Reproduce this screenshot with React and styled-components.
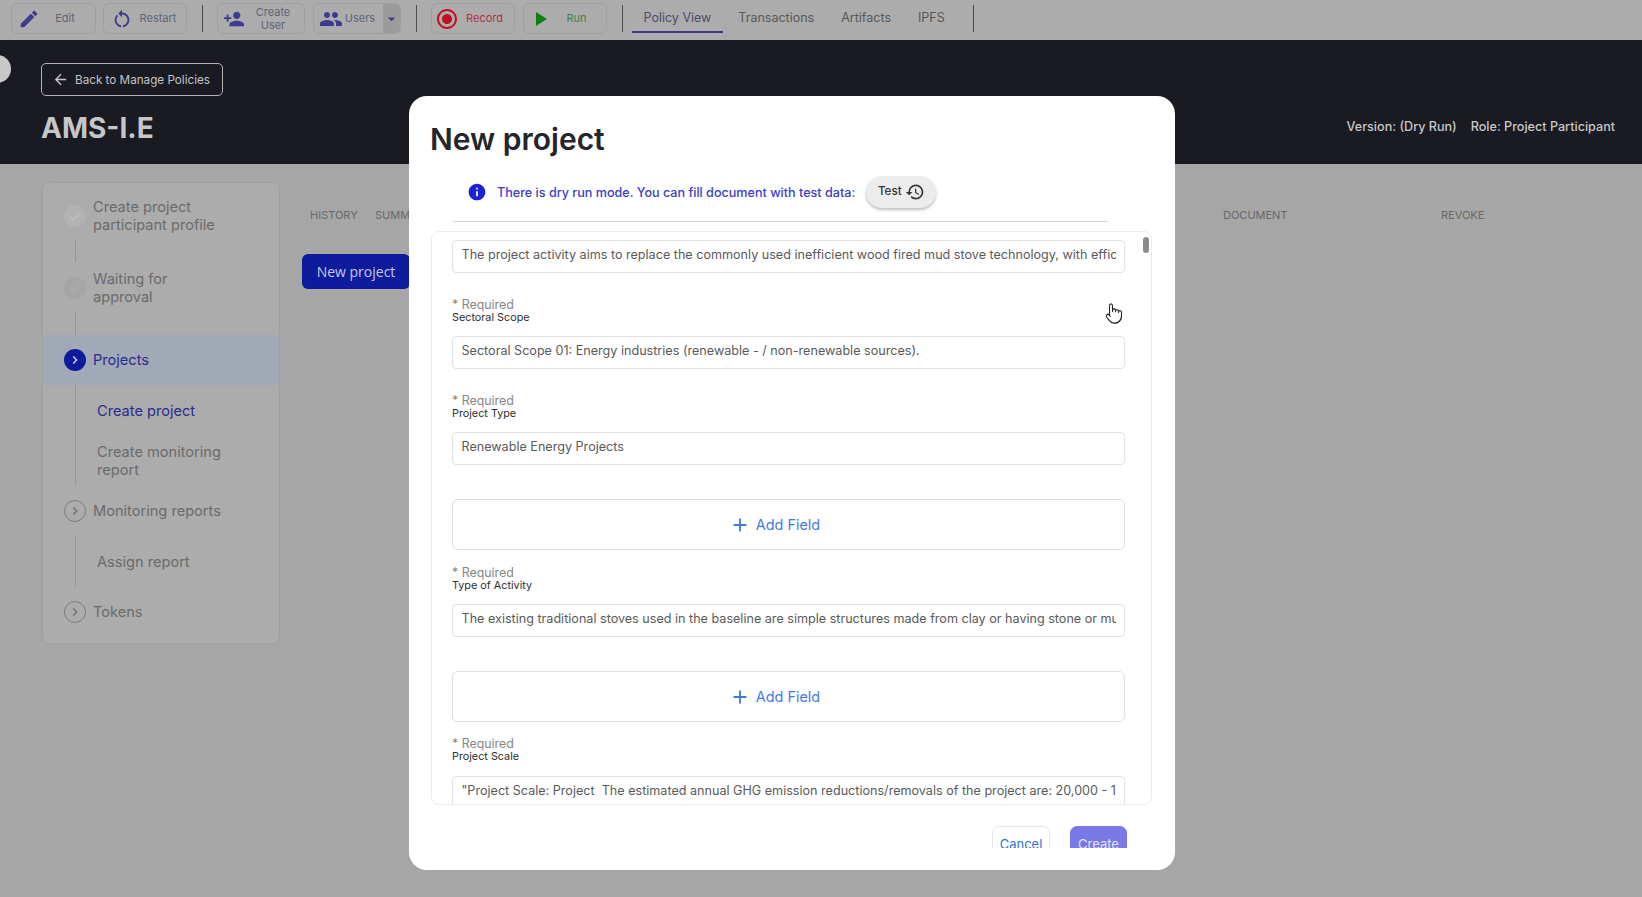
import React from "react";
import styled, { createGlobalStyle } from "styled-components";
import {
  MdEdit, MdRestartAlt, MdPersonAdd, MdPeople, MdArrowDropDown, MdRadioButtonChecked,
  MdPlayArrow, MdArrowBack, MdInfo, MdHistory, MdAdd, MdChevronRight, MdCheck,
} from "react-icons/md";
import { Pointer } from "lucide-react";

const Global = createGlobalStyle`
  html, body { margin: 0; padding: 0; }
  body { width: 1642px; height: 897px; overflow: hidden; background: #a6a6a6; font-family: Inter, "Liberation Sans", sans-serif; }
  * { box-sizing: border-box; }
`;

const Page = styled.div`
  position: relative;
  width: 1642px;
  height: 897px;
  overflow: hidden;
  display: flex;
  flex-direction: column;
`;

const Toolbar = styled.div`
  height: 40px;
  flex: none;
  background: #acacac;
  display: flex;
  align-items: flex-start;
  padding: 3px 0 0 11px;
`;
const ToolButton = styled.div`
  width: ${(p) => p.$w}px;
  height: 31px;
  margin-right: ${(p) => p.$mr ?? 7}px;
  border: 1px solid #a0a0a0;
  border-radius: 6px;
  display: flex;
  align-items: center;
  padding: 0 ${(p) => p.$pr ?? 5}px 0 ${(p) => p.$pl ?? 7}px;
  color: ${(p) => p.$color || "#5f6478"};
  font-size: 11px;
  line-height: 13px;
  & > svg { flex: none; color: ${(p) => p.$icon || "#3d3a91"}; }
`;
const ToolLabel = styled.span`
  flex: 1;
  text-align: center;
`;
const SplitButton = styled(ToolButton)`
  padding-right: 0;
  overflow: hidden;
`;
const DropPart = styled.span`
  width: 17px;
  height: 100%;
  margin-left: 6px;
  background: #9b9b9b;
  display: flex;
  align-items: center;
  justify-content: center;
  color: #3d3a91;
`;
const Divider = styled.span`
  width: 1px;
  height: 27px;
  margin: 2px ${(p) => p.$mr ?? 14}px 0 ${(p) => p.$ml ?? 8}px;
  background: #4c4c4c;
  flex: none;
`;
const Tab = styled.div`
  height: 33px;
  margin-top: -3px;
  padding: 4px 11.5px 0;
  margin-right: 4px;
  display: flex;
  align-items: center;
  font-size: 12.5px;
  color: ${(p) => (p.$active ? "#4d4d68" : "#585858")};
  border-bottom: 2px solid ${(p) => (p.$active ? "#3b3786" : "transparent")};
`;

const Header = styled.header`
  height: 124px;
  flex: none;
  background: #1a1a22;
  padding: 23px 27px 0 42px;
  display: flex;
  flex-direction: column;
  align-items: flex-start;
`;
const BackButton = styled.div`
  width: 182px;
  height: 33px;
  margin-left: -1px;
  border: 1px solid #b4b4b4;
  border-radius: 5px;
  display: flex;
  align-items: center;
  gap: 6px;
  padding-left: 10px;
  font-size: 11.7px;
  color: #c4c4c4;
`;
const HeaderRow = styled.div`
  align-self: stretch;
  display: flex;
  align-items: center;
  justify-content: space-between;
  margin-top: 14px;
  height: 36px;
`;
const PolicyName = styled.h1`
  margin: 0 0 0 -1px;
  font-size: 28px;
  font-weight: 700;
  color: #c6c6c8;
`;
const Meta = styled.div`
  display: flex;
  gap: 14px;
  margin-bottom: 3px;
  font-size: 12.6px;
  font-weight: 500;
  color: #c8c8c8;
`;
const CollapseDot = styled.span`
  position: absolute;
  left: -17px;
  top: 55px;
  width: 28px;
  height: 28px;
  border-radius: 50%;
  background: #c8c8c8;
`;

const Main = styled.main`
  flex: 1;
  display: flex;
  align-items: flex-start;
  padding: 19px 0 0 43px;
`;
const Sidebar = styled.nav`
  width: 236px;
  height: 460px;
  padding-top: 7px;
  background: #acacac;
  border-radius: 6px;
  box-shadow: 0 0 3px rgba(0, 0, 0, 0.08);
  font-size: 14.6px;
  line-height: 18px;
  color: #6b6b6b;
  flex: none;
`;
const StepRow = styled.div`
  height: ${(p) => p.$h}px;
  padding-left: 21px;
  display: flex;
  align-items: center;
  gap: 7px;
  background: ${(p) => (p.$active ? "#a0a9b5" : "transparent")};
  color: ${(p) => (p.$active ? "#2a2a92" : "inherit")};
`;
const StepDot = styled.span`
  width: 22px;
  height: 22px;
  flex: none;
  border-radius: 50%;
  display: flex;
  align-items: center;
  justify-content: center;
  background: ${(p) => (p.$kind === "done" ? "#b2b2b2" : p.$kind === "waiting" ? "#a6a6a6" : p.$kind === "active" ? "#0c1a9c" : "transparent")};
  border: ${(p) => (p.$kind === "open" ? "1px solid #7c7c7c" : "none")};
  color: ${(p) => (p.$kind === "done" ? "#bebebe" : p.$kind === "waiting" ? "#adadad" : p.$kind === "active" ? "#d8d8e8" : "#707070")};
`;
const Connector = styled.div`
  width: 1px;
  height: ${(p) => p.$h || 21}px;
  margin-left: 32px;
  background: #949494;
`;
const SubBlock = styled.div`
  margin-left: 32px;
  padding: ${(p) => p.$top}px 0 0 21px;
  height: ${(p) => p.$h}px;
  border-left: 1px solid #949494;
  display: flex;
  flex-direction: column;
  gap: 23px;
`;
const SubItem = styled.div`
  color: ${(p) => (p.$active ? "#2a2a92" : "inherit")};
  width: 150px;
`;

const Content = styled.section`
  flex: 1;
  margin-left: 23px;
`;
const ColumnHeads = styled.div`
  height: 64px;
  padding-left: 8px;
  display: grid;
  grid-template-columns: 65px 848px 218px 100px;
  align-items: center;
  font-size: 11px;
  color: #686868;
`;
const PrimaryButton = styled.div`
  width: 108px;
  height: 35px;
  margin-top: 7px;
  background: #0d1b9c;
  border-radius: 6px;
  display: flex;
  align-items: center;
  justify-content: center;
  font-family: "Open Sans", sans-serif;
  font-size: 14px;
  color: #c8cbe4;
`;

const Modal = styled.div`
  position: absolute;
  left: 409px;
  top: 96px;
  width: 766px;
  height: 774px;
  background: #fff;
  border-radius: 18px;
  padding: 23px 23px 0 22px;
  overflow: hidden;
`;
const ModalTitle = styled.h2`
  margin: 0 0 0 -1px;
  font-size: 30px;
  line-height: 40px;
  font-weight: 600;
  color: #25252b;
`;
const InfoRow = styled.div`
  height: 32px;
  margin-top: 17px;
  padding-left: 36px;
  display: flex;
  align-items: center;
  font-size: 12.6px;
  font-weight: 500;
  color: #3c3cc8;
  & > svg { color: #1c22d0; margin-right: 10px; }
`;
const TestButton = styled.div`
  width: 70px;
  height: 32px;
  margin-left: 11px;
  border-radius: 16px;
  background: #ececec;
  box-shadow: 0 2px 3px rgba(0, 0, 0, 0.25);
  display: flex;
  align-items: center;
  justify-content: center;
  gap: 3px;
  font-size: 11.6px;
  color: #333;
  & > span { margin-top: -2px; }
`;
const Rule = styled.hr`
  margin: 13px 44px 0 22px;
  border: 0;
  height: 1px;
  background: #d4d4d4;
`;
const FormPanel = styled.div`
  position: relative;
  height: 574px;
  margin-top: 9px;
  border: 1px solid #ececec;
  border-radius: 8px;
  padding: 8px 0 0 20px;
  overflow: hidden;
`;
const ScrollThumb = styled.span`
  position: absolute;
  right: 2px;
  top: 5px;
  width: 6px;
  height: 16px;
  border-radius: 3px;
  background: #8c8c8c;
`;
const FieldInput = styled.input`
  display: block;
  width: 673px;
  height: 33px;
  padding: 0 8px 5px 8.5px;
  border: 1px solid #e2e2e2;
  border-radius: 4px;
  background: #fff;
  outline: none;
  font-family: Inter, sans-serif;
  font-size: 12.6px;
  color: #5a5a5a;
`;
const FieldHead = styled.div`
  margin-top: ${(p) => p.$top}px;
  margin-bottom: ${(p) => p.$bottom}px;
`;
const Required = styled.div`
  font-size: 12.4px;
  line-height: 14px;
  color: #858585;
`;
const FieldName = styled.div`
  font-size: 10.8px;
  line-height: 12px;
  color: #2e2e2e;
`;
const AddField = styled.div`
  width: 673px;
  height: 51px;
  margin-top: 34px;
  padding-right: 28px;
  border: 1px solid #dedede;
  border-radius: 6px;
  display: flex;
  align-items: center;
  justify-content: center;
  gap: 5px;
  font-size: 14.4px;
  color: #3f7bdc;
`;
const Footer = styled.div`
  height: 22px;
  margin-top: 21px;
  padding-right: 25px;
  display: flex;
  justify-content: flex-end;
  gap: 20px;
  overflow: hidden;
`;
const FooterButton = styled.div`
  width: ${(p) => p.$w}px;
  height: 36px;
  flex: none;
  border-radius: 7px;
  border: 1px solid ${(p) => (p.$primary ? "#7878e6" : "#e4e4e4")};
  background: ${(p) => (p.$primary ? "#7878e6" : "#fff")};
  color: ${(p) => (p.$primary ? "#e4e4fc" : "#2f72dc")};
  font-size: 13px;
  display: flex;
  align-items: center;
  justify-content: center;
`;
const HandCursor = styled(Pointer)`
  position: absolute;
  left: 1105px;
  top: 302px;
  fill: #fff;
  stroke: #222;
`;

const Field = ({ name, top, bottom, value }) => (
  <>
    <FieldHead $top={top} $bottom={bottom}>
      <Required>* Required</Required>
      <FieldName>{name}</FieldName>
    </FieldHead>
    <FieldInput readOnly value={value} />
  </>
);

const AddRow = () => (
  <AddField>
    <MdAdd size={22} />
    Add Field
  </AddField>
);

export default function App() {
  return (
    <Page>
      <Global />
      <Toolbar>
        <ToolButton $w={85} $pl={6}><MdEdit size={22} /><ToolLabel>Edit</ToolLabel></ToolButton>
        <ToolButton $w={84} $mr={8} $pr={3}><MdRestartAlt size={22} /><ToolLabel>Restart</ToolLabel></ToolButton>
        <Divider $ml={7} />
        <ToolButton $w={88} $mr={8} $pl={5} $pr={3}><MdPersonAdd size={22} /><ToolLabel>Create<br />User</ToolLabel></ToolButton>
        <SplitButton $w={88} $mr={0} $pl={5}>
          <MdPeople size={24} />
          <ToolLabel>Users</ToolLabel>
          <DropPart><MdArrowDropDown size={22} /></DropPart>
        </SplitButton>
        <Divider $ml={15} />
        <ToolButton $w={84} $mr={8} $pl={3} $pr={4} $color="#ad3246" $icon="#c20f1f"><MdRadioButtonChecked size={24} /><ToolLabel>Record</ToolLabel></ToolButton>
        <ToolButton $w={84} $mr={0} $pl={4} $pr={5} $color="#44804e" $icon="#108012"><MdPlayArrow size={24} /><ToolLabel>Run</ToolLabel></ToolButton>
        <Divider $ml={15} $mr={9} />
        <Tab $active>Policy View</Tab>
        <Tab>Transactions</Tab>
        <Tab>Artifacts</Tab>
        <Tab>IPFS</Tab>
        <Divider $ml={13} />
      </Toolbar>

      <Header>
        <BackButton><MdArrowBack size={17} />Back to Manage Policies</BackButton>
        <HeaderRow>
          <PolicyName>AMS-I.E</PolicyName>
          <Meta><span>Version: (Dry Run)</span><span>Role: Project Participant</span></Meta>
        </HeaderRow>
      </Header>
      <CollapseDot />

      <Main>
        <Sidebar>
          <StepRow $h={51}><StepDot $kind="done"><MdCheck size={16} /></StepDot><span>Create project<br />participant profile</span></StepRow>
          <Connector />
          <StepRow $h={51}><StepDot $kind="waiting"><MdCheck size={16} /></StepDot><span>Waiting for<br />approval</span></StepRow>
          <Connector $h={22} />
          <StepRow $h={50} $active><StepDot $kind="active"><MdChevronRight size={16} /></StepDot><span>Projects</span></StepRow>
          <SubBlock $h={100} $top={17}>
            <SubItem $active>Create project</SubItem>
            <SubItem>Create monitoring report</SubItem>
          </SubBlock>
          <StepRow $h={51}><StepDot $kind="open"><MdChevronRight size={16} /></StepDot><span>Monitoring reports</span></StepRow>
          <SubBlock $h={51} $top={17}><SubItem>Assign report</SubItem></SubBlock>
          <StepRow $h={50}><StepDot $kind="open"><MdChevronRight size={16} /></StepDot><span>Tokens</span></StepRow>
        </Sidebar>
        <Content>
          <ColumnHeads>
            <span>HISTORY</span>
            <span>SUMMARY</span>
            <span>DOCUMENT</span>
            <span>REVOKE</span>
          </ColumnHeads>
          <PrimaryButton>New project</PrimaryButton>
        </Content>
      </Main>

      <Modal>
        <ModalTitle>New project</ModalTitle>
        <InfoRow>
          <MdInfo size={20} />
          There is dry run mode. You can fill document with test data:
          <TestButton><span>Test</span><MdHistory size={20} /></TestButton>
        </InfoRow>
        <Rule />
        <FormPanel>
          <ScrollThumb />
          <FieldInput readOnly value="The project activity aims to replace the commonly used inefficient wood fired mud stove technology, with efficient cook stoves in the households" />
          <Field name="Sectoral Scope" top={25} bottom={12} value="Sectoral Scope 01: Energy industries (renewable - / non-renewable sources)." />
          <Field name="Project Type" top={25} bottom={12} value="Renewable Energy Projects" />
          <AddRow />
          <Field name="Type of Activity" top={16} bottom={12} value="The existing traditional stoves used in the baseline are simple structures made from clay or having stone or mud walls in the households" />
          <AddRow />
          <Field name="Project Scale" top={15} bottom={13} value={'"Project Scale: Project  The estimated annual GHG emission reductions/removals of the project are: 20,000 - 100,000 tCO2e per year'} />
        </FormPanel>
        <Footer>
          <FooterButton $w={58}>Cancel</FooterButton>
          <FooterButton $w={57} $primary>Create</FooterButton>
        </Footer>
      </Modal>
      <HandCursor width={18} height={23} strokeWidth={1.4} preserveAspectRatio="none" />
    </Page>
  );
}
